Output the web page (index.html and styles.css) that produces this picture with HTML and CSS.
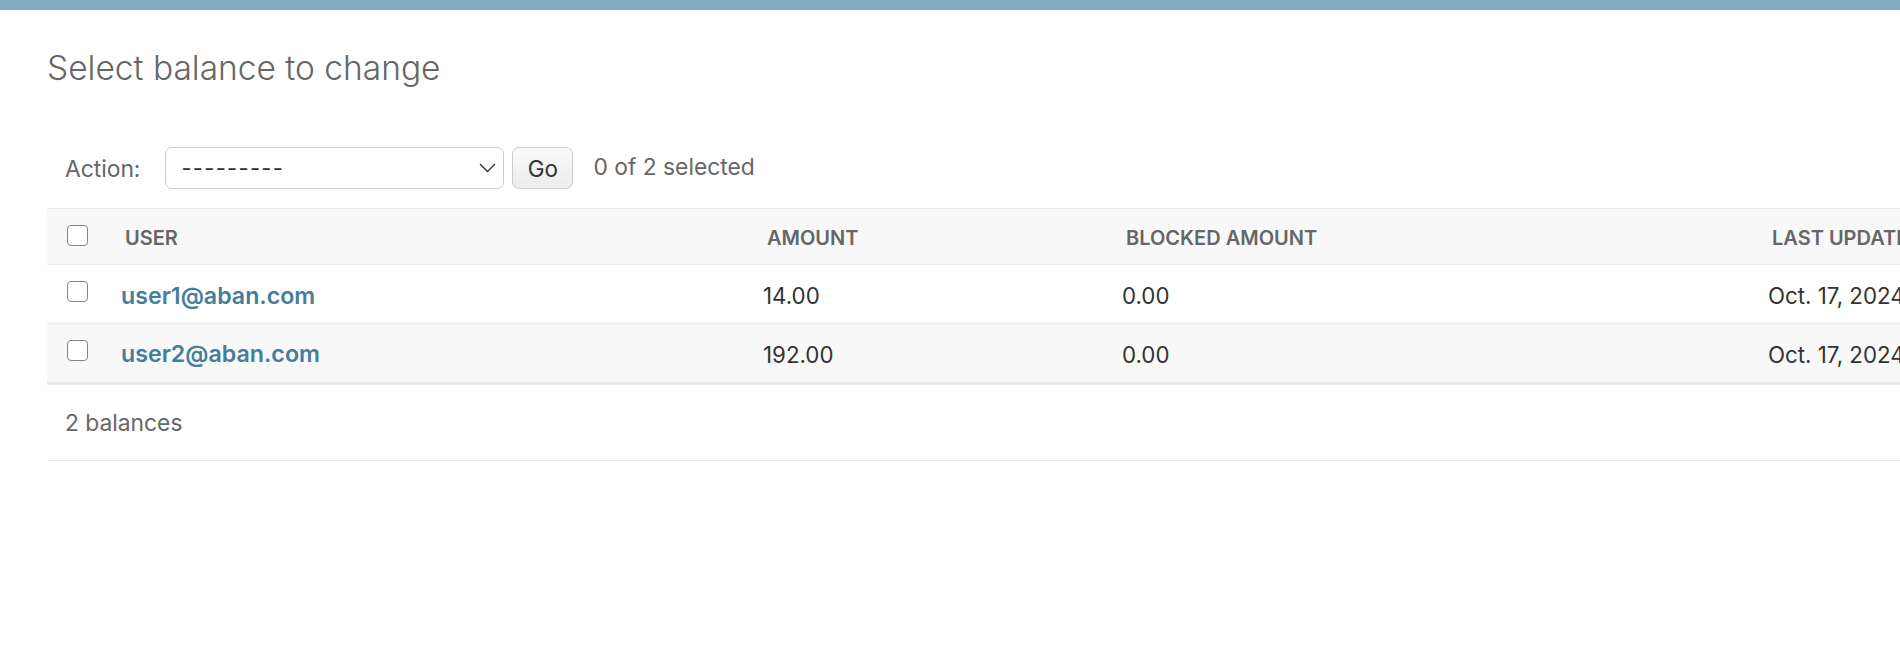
FILE: index.html
```html
<!DOCTYPE html>
<html lang="en">
<head>
<meta charset="utf-8">
<title>Select balance to change</title>
<link rel="stylesheet" href="styles.css">
</head>
<body>
<div class="topbar"></div>
<main class="content">
  <h1 class="title">Select balance to change</h1>
  <form class="actions">
    <label class="action-label">Action:</label>
    <div class="select">
      <span class="select-value">---------</span>
      <svg class="chevron" width="17" height="10" viewBox="0 0 17 10"><polyline points="1,1 8.5,8.5 16,1" fill="none" stroke="#333" stroke-width="1.4"/></svg>
    </div>
    <button type="button" class="go">Go</button>
    <span class="counter">0 of 2 selected</span>
  </form>
  <table class="results">
    <colgroup>
      <col class="c-check"><col class="c-user"><col class="c-amount"><col class="c-blocked"><col class="c-updated">
    </colgroup>
    <thead>
      <tr>
        <th class="check-cell"><span class="cb cb-head"></span></th>
        <th><span class="th-text">User</span></th>
        <th><span class="th-text">Amount</span></th>
        <th><span class="th-text">Blocked amount</span></th>
        <th><span class="th-text">Last updated</span></th>
      </tr>
    </thead>
    <tbody>
      <tr class="row1">
        <td class="check-cell"><span class="cb cb-row"></span></td>
        <th class="link-cell"><a href="#">user1@aban.com</a></th>
        <td>14.00</td>
        <td>0.00</td>
        <td>Oct. 17, 2024, 10:12 a.m.</td>
      </tr>
      <tr class="row2">
        <td class="check-cell"><span class="cb cb-row"></span></td>
        <th class="link-cell"><a href="#">user2@aban.com</a></th>
        <td>192.00</td>
        <td>0.00</td>
        <td>Oct. 17, 2024, 10:12 a.m.</td>
      </tr>
    </tbody>
  </table>
  <p class="paginator">2 balances</p>
</main>
</body>
</html>
```

FILE: styles.css
```css
html, body {
  margin: 0;
  padding: 0;
}
body {
  width: 1900px;
  height: 662px;
  overflow: hidden;
  background: #fff;
  font-family: Inter, "Noto Sans", "Liberation Sans", sans-serif;
  color: #333;
}
.topbar {
  height: 10px;
  background: #84abc6;
}
.content {
  padding-left: 47px;
  width: 2600px;
}
.title {
  margin: 38px 0 0;
  font-size: 33.5px;
  line-height: 40px;
  font-weight: 300;
  color: #666;
  letter-spacing: 0;
}
.actions {
  display: flex;
  align-items: center;
  margin-top: 59px;
  height: 42px;
  padding-left: 18px;
  color: #666;
  font-size: 22.8px;
}
.action-label {
  margin-right: 25px;
}
.select {
  box-sizing: border-box;
  width: 339px;
  height: 42px;
  border: 1px solid #ccc;
  border-radius: 7px;
  display: flex;
  align-items: center;
  justify-content: space-between;
  padding: 0 7px 0 15px;
  color: #333;
  background: #fff;
}
.select-value {
  font-size: 22px;
  letter-spacing: 1.3px;
}
.chevron {
  display: block;
}
.go {
  box-sizing: border-box;
  margin-left: 8px;
  width: 61px;
  height: 42px;
  border: 1px solid #ccc;
  border-radius: 7px;
  background: linear-gradient(#fafafa, #ececec);
  font-family: inherit;
  font-size: 22.5px;
  color: #333;
  padding: 0;
}
.counter {
  margin-left: 20px;
  margin-top: -4px;
}
.results {
  margin-top: 19px;
  border-collapse: collapse;
  table-layout: fixed;
  width: 2307px;
}
.c-check { width: 60px; }
.c-user { width: 642px; }
.c-amount { width: 359px; }
.c-blocked { width: 646px; }
.c-updated { width: 600px; }
thead th {
  height: 56px;
  box-sizing: border-box;
  background: #f8f8f8;
  border-top: 1px solid #e8e8e8;
  border-bottom: 1px solid #e8e8e8;
  text-align: left;
  padding: 0;
  vertical-align: middle;
}
.th-text {
  display: block;
  padding: 2px 18px 0;
  font-size: 20px;
  font-weight: 600;
  text-transform: uppercase;
  color: #666;
  white-space: nowrap;
}
tbody td, tbody th {
  height: 59px;
  box-sizing: border-box;
  padding: 3px 14px 0;
  border-bottom: 1px solid #e8e8e8;
  font-size: 22.3px;
  font-weight: 400;
  text-align: left;
  vertical-align: middle;
  color: #333;
  white-space: nowrap;
}
.row2 td, .row2 th {
  background: #f8f8f8;
  border-bottom: 2px solid #e8e8e8;
}
.link-cell a {
  color: #447e9b;
  font-weight: 600;
  font-size: 23.2px;
  text-decoration: none;
}
.check-cell {
  text-align: center;
  padding: 0;
}
tbody .check-cell {
  text-align: center;
  padding: 0;
  vertical-align: middle;
}
.cb {
  display: inline-block;
  box-sizing: border-box;
  width: 21px;
  height: 21px;
  border: 1.5px solid #858585;
  border-radius: 4px;
  background: #fff;
  vertical-align: middle;
  position: relative;
}
.cb-head {
  top: -2px;
}
.cb-row {
  top: -5px;
}
.paginator {
  margin: 0;
  border-top: 1px solid #e8e8e8;
  border-bottom: 1px solid #e8e8e8;
  height: 75px;
  box-sizing: content-box;
  padding-left: 18px;
  display: flex;
  align-items: center;
  font-size: 22.8px;
  color: #666;
}
```
